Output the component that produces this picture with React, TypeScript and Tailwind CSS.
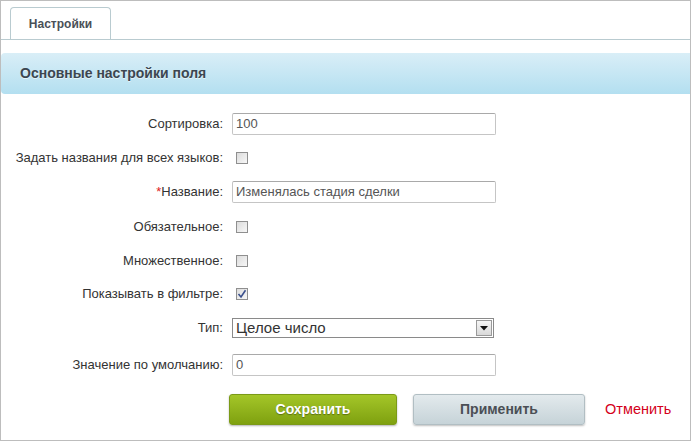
import { ReactNode } from 'react'

function Row({ label, h, required, children }: { label: string; h: string; required?: boolean; children: ReactNode }) {
  return (
    <div className={`flex items-center ${h}`}>
      <div className="w-[222px] shrink-0 text-right text-[13px] text-[#333]">
        {required && <span className="text-[#e02020]">*</span>}
        {label}
      </div>
      <div className="ml-[9px] flex items-center">{children}</div>
    </div>
  )
}

function TextInput({ value }: { value: string }) {
  return (
    <div className="w-[264px] h-[22px] flex items-center px-[3px] bg-white border border-[#c5c5c5] border-t-[#a9a9a9] rounded-[2px] text-[13px] text-[#555]">
      {value}
    </div>
  )
}

function Checkbox({ checked }: { checked?: boolean }) {
  return (
    <div className="ml-[4px] w-[12px] h-[12px] border border-[#8f8f8f] bg-gradient-to-br from-[#dcdcdc] to-[#f7f7f7] flex items-center justify-center">
      {checked && (
        <svg width="10" height="10" viewBox="0 0 10 10">
          <path d="M1.5 5 L4 8 L8.5 1.2" fill="none" stroke="#3a4f8c" strokeWidth="1.6" />
        </svg>
      )}
    </div>
  )
}

export default function App() {
  return (
    <div className="w-[691px] h-[441px] bg-white border border-[#bdbdbd] overflow-hidden" style={{ fontFamily: '"Liberation Sans", Arial, sans-serif' }}>
      <div className="h-[39px] border-b border-[#b9cbd0] flex items-end pl-[9px]">
        <div className="w-[101px] h-[32px] border border-b-0 border-[#b9cbd0] rounded-t-[4px] flex items-center justify-center text-[12px] font-bold text-[#4a5057] pt-[1px]">
          Настройки
        </div>
      </div>
      <div className="mt-[13px] h-[41px] rounded-l-[4px] bg-gradient-to-b from-[#d9eef7] to-[#b3dff0] flex items-center pl-[19px]">
        <span className="text-[14px] font-bold text-[#3c4650] [text-shadow:0_1px_0_rgba(255,255,255,0.6)]">Основные настройки поля</span>
      </div>
      <div className="mt-[13px]">
        <Row label="Сортировка:" h="h-[34px]"><TextInput value="100" /></Row>
        <Row label="Задать названия для всех языков:" h="h-[33px]"><Checkbox /></Row>
        <Row label="Название:" h="h-[36px]" required><TextInput value="Изменялась стадия сделки" /></Row>
        <Row label="Обязательное:" h="h-[34px]"><Checkbox /></Row>
        <Row label="Множественное:" h="h-[33px]"><Checkbox /></Row>
        <Row label="Показывать в фильтре:" h="h-[34px]"><Checkbox checked /></Row>
        <Row label="Тип:" h="h-[34px]">
          <div className="w-[262px] h-[20px] flex items-center justify-between bg-white border border-[#8a8a8a] text-[15px] text-[#333]">
            <span className="pl-[3px]">Целое число</span>
            <div className="w-[16px] h-[16px] mr-[1px] border border-[#9a9a9a] bg-gradient-to-b from-[#f6f6f6] to-[#d9d9d9] flex items-center justify-center">
              <svg width="8" height="5" viewBox="0 0 8 5"><path d="M0 0 H8 L4 4.5 Z" fill="#111" /></svg>
            </div>
          </div>
        </Row>
        <Row label="Значение по умолчанию:" h="h-[40px]"><TextInput value="0" /></Row>
      </div>
      <div className="mt-[9px] flex items-center pl-[228px]">
        <button className="w-[168px] h-[31px] rounded-[3px] bg-gradient-to-b from-[#a4c628] to-[#7fa10f] border border-[#7b9a17] shadow-[0_1px_2px_rgba(0,0,0,0.3)] text-white text-[14px] font-bold [text-shadow:0_1px_1px_rgba(0,0,0,0.35)]">
          Сохранить
        </button>
        <button className="ml-[16px] w-[172px] h-[31px] rounded-[3px] bg-gradient-to-b from-[#e3eaed] to-[#c6d3d8] border border-[#b1bec3] shadow-[0_1px_2px_rgba(0,0,0,0.25)] text-[#4b4f55] text-[14px] font-bold">
          Применить
        </button>
        <span className="ml-[20px] text-[14.5px] text-[#d4001b]">Отменить</span>
      </div>
    </div>
  )
}
